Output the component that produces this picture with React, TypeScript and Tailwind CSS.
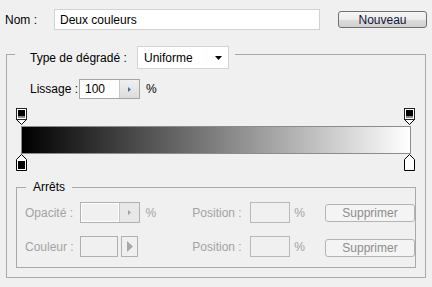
function OpacityStop() {
  return (
    <svg width="12" height="17" viewBox="0 0 12 17" className="block">
      <path d="M0.5 11.5 L5.5 16.5 L10.5 11.5" fill="#fff" stroke="#000" />
      <rect x="0.5" y="0.5" width="10" height="11" fill="#fff" stroke="#222" />
      <rect x="2" y="2" width="7" height="6" fill="#000" />
      <rect x="2" y="8" width="7" height="2" fill="#8a8a8a" />
    </svg>
  );
}

function ColorStop({ color }: { color: string }) {
  return (
    <svg width="12" height="17" viewBox="0 0 12 17" className="block">
      <path d="M0.5 5.5 L5.5 0.5 L10.5 5.5 V16.5 H0.5 Z" fill="#fff" stroke="#000" />
      <rect x="2" y="7" width="7" height="8" fill={color} stroke={color === '#fff' ? 'none' : '#000'} strokeWidth="0" />
    </svg>
  );
}

function DisabledButton() {
  return (
    <div className="flex h-[18px] w-[90px] shrink-0 items-center justify-center rounded-[3px] border border-[#b4b4b4] bg-[#f4f4f4] text-[#8c8c8c]">
      Supprimer
    </div>
  );
}

export default function App() {
  return (
    <div
      className="h-[287px] w-[432px] overflow-hidden bg-[#f0f0f0] text-[12px] leading-none text-black"
      style={{ fontFamily: '"Liberation Sans", Arial, sans-serif' }}
    >
      {/* Nom */}
      <div className="flex items-center pl-[5px] pt-[9px]">
        <span className="w-[49px]">Nom :</span>
        <div className="flex h-[21px] w-[266px] items-center border border-[#d2d2d2] bg-white px-[5px]">Deux couleurs</div>
        <div className="ml-[18px] flex h-[17px] w-[89px] items-center justify-center rounded-[3px] border border-[#707070] bg-[linear-gradient(#f6f6f6_0%,#ececec_50%,#dddddd_51%,#d0d0d0_100%)] text-[#14143a]">
          Nouveau
        </div>
      </div>

      {/* Outer group */}
      <div className="ml-[6px] mt-[24px] h-[224px] w-[420px] border border-[#a9a9a9]">
        <div className="-mt-[9px] flex">
          <div className="ml-[8px] flex h-[23px] items-center bg-[#f0f0f0] pl-[15px] pr-[6px]">
            <span className="w-[107px]">Type de dégradé :</span>
            <div className="flex h-[23px] w-[92px] items-center justify-between border border-[#d4d4d4] bg-white pl-[6px] pr-[5px]">
              <span>Uniforme</span>
              <svg width="8" height="4" viewBox="0 0 8 4">
                <path d="M0 0 H7 L3.5 4 Z" fill="#000" />
              </svg>
            </div>
          </div>
        </div>

        {/* Lissage */}
        <div className="ml-[23px] mt-[10px] flex items-center">
          <span className="w-[49px]">Lissage :</span>
          <div className="flex h-[20px] w-[61px] border border-[#a5a5a5] bg-white">
            <div className="flex flex-1 items-center pl-[5px]">100</div>
            <div className="flex w-[20px] items-center justify-center border-l border-[#c8c8c8] bg-[linear-gradient(#f0f0f0,#dcdcdc)]">
              <svg width="3" height="5" viewBox="0 0 3 5">
                <path d="M0 0 L3 2.5 L0 5 Z" fill="#4a6fae" />
              </svg>
            </div>
          </div>
          <span className="ml-[6px]">%</span>
        </div>

        {/* Gradient editor */}
        <div className="ml-[9px] mt-[9px] flex w-[400px] justify-between">
          <OpacityStop />
          <OpacityStop />
        </div>
        <div className="ml-[14px] mt-[1px] h-[28px] w-[390px] border border-[#8c8c8c] bg-[linear-gradient(to_right,#000,#fff)]" />
        <div className="ml-[9px] flex w-[400px] justify-between">
          <ColorStop color="#000" />
          <ColorStop color="#fff" />
        </div>

        {/* Arrêts */}
        <div className="ml-[9px] mt-[16px] h-[81px] w-[400px] border border-[#a9a9a9]">
          <div className="-mt-[8px] flex">
            <span className="ml-[9px] bg-[#f0f0f0] px-[7px] leading-[14px]">Arrêts</span>
          </div>
          <div className="ml-[8px] mt-[8px] flex items-center text-[#a3a3a3]">
            <span className="w-[56px]">Opacité :</span>
            <div className="flex w-[113px] items-center">
              <div className="flex h-[21px] w-[60px] border border-[#b0b0b0] bg-[#f0f0f0]">
                <div className="flex-1 border border-white" />
                <div className="flex w-[20px] items-center justify-center border-l border-[#c4c4c4] bg-[#e8e8e8]">
                  <svg width="3" height="5" viewBox="0 0 3 5">
                    <path d="M0 0 L3 2.5 L0 5 Z" fill="#a0a0a0" />
                  </svg>
                </div>
              </div>
              <span className="ml-[5px]">%</span>
            </div>
            <span className="w-[58px]">Position :</span>
            <div className="h-[21px] w-[41px] border border-[#b8b8b8] bg-[#f0f0f0]" />
            <span className="w-[35px] pl-[4px]">%</span>
            <DisabledButton />
          </div>
          <div className="ml-[8px] mt-[13px] flex items-center text-[#a3a3a3]">
            <span className="w-[56px]">Couleur :</span>
            <div className="flex w-[113px] items-center">
              <div className="h-[21px] w-[38px] border border-[#b0b0b0] bg-[#f0f0f0]" />
              <div className="ml-[3px] flex h-[21px] w-[17px] items-center justify-center border border-[#b0b0b0] bg-[#f0f0f0]">
                <svg width="6" height="11" viewBox="0 0 6 11">
                  <path d="M0 0 L6 5.5 L0 11 Z" fill="#a8a8a8" />
                </svg>
              </div>
            </div>
            <span className="w-[58px]">Position :</span>
            <div className="h-[21px] w-[41px] border border-[#b8b8b8] bg-[#f0f0f0]" />
            <span className="w-[35px] pl-[4px]">%</span>
            <div className="mt-[3px]">
              <DisabledButton />
            </div>
          </div>
        </div>
      </div>
    </div>
  );
}
